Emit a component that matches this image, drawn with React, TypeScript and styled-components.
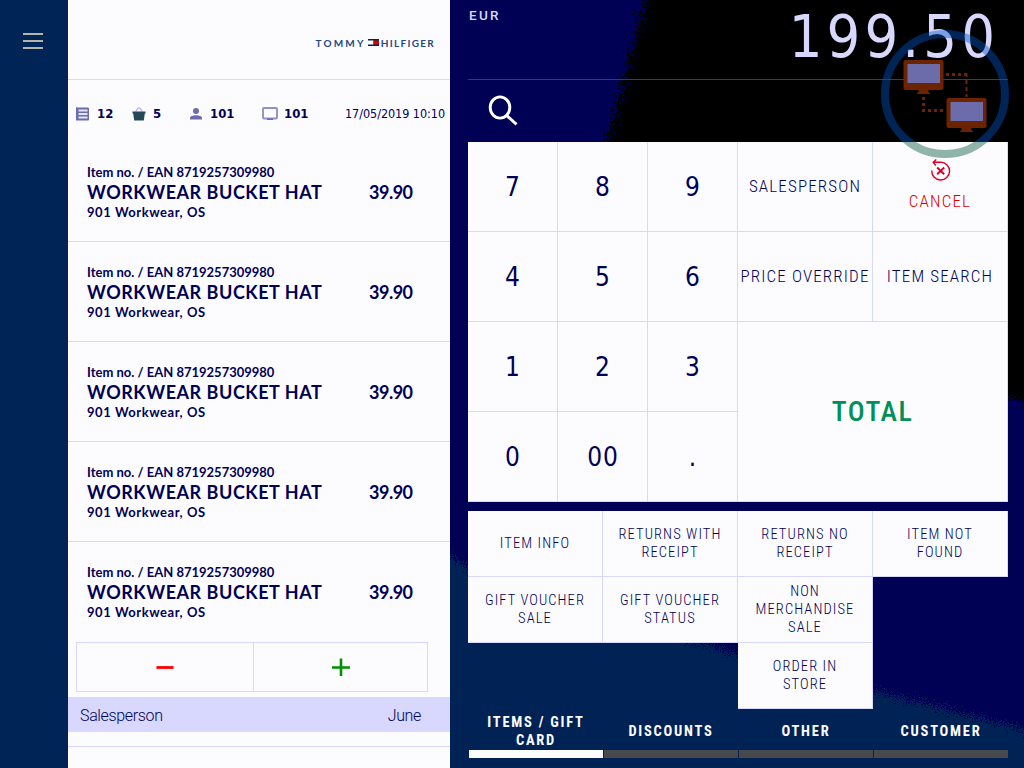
import React from "react";
import styled, { createGlobalStyle } from "styled-components";

const ink = "#000055";
const line = "#d8d8ff";
const paper = "#fcfcff";

const Global = createGlobalStyle`
  * { box-sizing: border-box; }
  body { margin: 0; background: #002455; }
  button { margin: 0; padding: 0; border: 0; background: none; color: inherit; font: inherit; letter-spacing: inherit; }
`;

const digits = `"DejaVu Sans Condensed", "DejaVu Sans", sans-serif`;
const narrow = `"Liberation Sans Narrow", "Roboto", sans-serif`;
const human = `"Lato", sans-serif`;

const Screen = styled.div`
  display: grid;
  grid-template-columns: 68px 382px 574px;
  width: 1024px;
  height: 768px;
  overflow: hidden;
  color: ${ink};
`;
const Sidebar = styled.nav`
  background: #002455;
  padding: 33px 0 0 23px;
`;
const MenuButton = styled.button`
  display: flex;
  flex-direction: column;
  gap: 5px;
  width: 20px;
`;
const MenuBar = styled.span`
  height: 2px;
  width: 20px;
  background: #b4b4aa;
`;

const Receipt = styled.main`
  background: ${paper};
  display: flex;
  flex-direction: column;
`;
const Brand = styled.header`
  height: 80px;
  flex: none;
  border-bottom: 1px solid ${line};
  display: flex;
  justify-content: flex-end;
  align-items: center;
  gap: 2px;
  padding: 6px 15px 0 0;
  font: 700 10px/12px ${human};
  color: #24487f;
`;
const BrandWord = styled.span<{ $gap: number }>`
  letter-spacing: ${(p) => p.$gap}px;
`;
const Stats = styled.div`
  height: 62px;
  flex: none;
  display: grid;
  grid-template-columns: 56px 58px 72px 83px 1fr;
  align-items: center;
  padding: 5px 0 0 8px;
`;
const Stat = styled.span<{ $gap: number }>`
  display: flex;
  align-items: center;
  gap: ${(p) => p.$gap}px;
  font: 700 13px/16px ${digits};
  font-stretch: condensed;
`;
const Stamp = styled.time`
  font: 12.5px/16px ${digits};
  font-stretch: condensed;
  letter-spacing: -0.05px;
  white-space: nowrap;
`;
const Item = styled.article<{ $last?: boolean }>`
  height: 100px;
  flex: none;
  display: grid;
  grid-template-columns: 282px 1fr;
  grid-template-rows: 19px 21px 20px;
  padding: 20px 0 0 19px;
  border-bottom: ${(p) => (p.$last ? 0 : 1)}px solid ${line};
  font-family: ${human};
  font-weight: 700;
  white-space: nowrap;
`;
const Small = styled.span<{ $spacing?: number }>`
  grid-column: 1 / -1;
  font-size: 13px;
  line-height: 20px;
  letter-spacing: ${(p) => p.$spacing ?? 0}px;
`;
const Name = styled.span`
  font-size: 18px;
  line-height: 22px;
  letter-spacing: 0.53px;
`;
const Price = styled(Name)`
  letter-spacing: -0.5px;
`;
const Quantity = styled.div`
  height: 50px;
  width: 352px;
  flex: none;
  margin: 0 0 5px 8px;
  border: 1px solid ${line};
  display: grid;
  grid-template-columns: 176px 1fr;
`;
const Step = styled.button`
  display: grid;
  place-items: center;
  & + & { border-left: 1px solid ${line}; }
`;
const Clerk = styled.div`
  height: 35px;
  flex: none;
  display: flex;
  justify-content: space-between;
  padding: 0 29px 0 12px;
  background: ${line};
  font: 300 16px/38px "Roboto", sans-serif;
  letter-spacing: -0.35px;
`;
const ReceiptEnd = styled.div`
  height: 15px;
  border-bottom: 1px solid ${line};
`;

const Register = styled.section`
  position: relative;
  z-index: 0;
  padding: 0 16px 0 18px;
  background: #000055;
`;
const Backdrop = styled.svg`
  position: absolute;
  inset: 0;
  z-index: -1;
`;
const Amount = styled.header`
  height: 80px;
  display: flex;
  justify-content: space-between;
  border-bottom: 1px solid #24485a;
`;
const Currency = styled.span`
  padding: 8px 0 0 1px;
  color: ${line};
  font: 500 13.5px/15px "Roboto", sans-serif;
  font-stretch: 88%;
  letter-spacing: 2.3px;
`;
const Sum = styled.span`
  padding-right: 9px;
  color: ${line};
  font: 59px/73px ${digits};
  font-stretch: condensed;
  letter-spacing: 4.1px;
`;
const Search = styled.div`
  height: 62px;
  padding: 15px 0 0 19px;
`;
const Keypad = styled.div`
  display: grid;
  grid-template-columns: 90px 90px 90px 135px 135px;
  grid-template-rows: repeat(4, 90px);
  background: ${paper};
`;
const Key = styled.button<{ $kind?: "word" | "total"; $red?: boolean }>`
  display: flex;
  flex-direction: column;
  align-items: center;
  justify-content: center;
  border-right: 1px solid ${line};
  border-bottom: 1px solid ${line};
  padding-bottom: ${(p) => (p.$red ? 3 : p.$kind === "word" ? 2 : 0)}px;
  padding-left: ${(p) => (p.$kind ? 0 : 1)}px;
  white-space: nowrap;
  color: ${(p) => (p.$red ? "#d80000" : p.$kind === "total" ? "#009055" : ink)};
  font-family: ${(p) => (p.$kind ? narrow : digits)};
  font-stretch: condensed;
  font-size: ${(p) => (p.$kind === "word" ? 17 : p.$kind === "total" ? 28 : 26)}px;
  font-weight: ${(p) => (p.$kind === "total" ? 500 : p.$kind === "word" ? 300 : 400)};
  letter-spacing: ${(p) => (p.$kind === "word" ? 1.15 : p.$kind ? 1.5 : 0.9)}px;
  ${(p) => p.$kind === "total" && "grid-column: 4 / 6; grid-row: 3 / 5;"}
`;
const CancelIcon = styled.svg`
  margin: 0 0 10px 2px;
`;
const Functions = styled.div`
  height: 198px;
  margin-top: 9px;
  display: grid;
  grid-template-columns: repeat(4, 135px);
  grid-template-rows: repeat(3, 66px);
`;
const Action = styled.button<{ $column?: number }>`
  grid-column: ${(p) => p.$column ?? "auto"};
  background: ${paper};
  border-right: 1px solid ${line};
  border-bottom: 1px solid ${line};
  padding-top: 1px;
  font: 300 14.5px/18px ${narrow};
  font-stretch: condensed;
  letter-spacing: 1.1px;
  white-space: pre-line;
`;
const Tabs = styled.div`
  display: grid;
  grid-template-columns: repeat(4, 1fr);
  gap: 1px;
  padding-left: 1px;
`;
const Tab = styled.button<{ $active?: boolean }>`
  height: 49px;
  border-bottom: 8px solid ${(p) => (p.$active ? paper : "#48484f")};
  color: ${paper};
  display: flex;
  align-items: center;
  justify-content: center;
  padding-top: 5px;
  font: 700 14.5px/18px ${narrow};
  font-stretch: condensed;
  letter-spacing: 1.75px;
  white-space: pre-line;
  text-align: center;
`;
const Network = styled.svg`
  position: absolute;
  left: 429px;
  top: 28px;
  pointer-events: none;
`;

const Monitor = ({ x, y }: { x: number; y: number }) => (
  <g transform={`translate(${x} ${y})`}>
    <rect width="40" height="30" rx="2" fill="#6c2400" />
    <rect x="4" y="4" width="32.5" height="19" fill="#6c6caa" />
    <path d="M15 30h10v2l2 2H13l2-2z" fill="#6c2400" />
  </g>
);

const actions: { label: string; column?: number }[] = [
  { label: "ITEM INFO" },
  { label: "RETURNS WITH\nRECEIPT" },
  { label: "RETURNS NO\nRECEIPT" },
  { label: "ITEM NOT\nFOUND" },
  { label: "GIFT VOUCHER\nSALE" },
  { label: "GIFT VOUCHER\nSTATUS" },
  { label: "NON\nMERCHANDISE\nSALE" },
  { label: "ORDER IN\nSTORE", column: 3 },
];

export default function App() {
  return (
    <Screen>
      <Global />
      <Sidebar>
        <MenuButton aria-label="Menu">
          <MenuBar /><MenuBar /><MenuBar />
        </MenuButton>
      </Sidebar>

      <Receipt>
        <Brand>
          <BrandWord $gap={2.2}>TOMMY</BrandWord>
          <svg width="11" height="7" viewBox="0 0 11 7">
            <path fill="#002455" d="M0 0h11v7H0z" />
            <path fill="#fff" d="M0 1.5h5.5v4H0z" />
            <path fill="#d80000" d="M5.5 1.5H11v4H5.5z" />
          </svg>
          <BrandWord $gap={1.3}>HILFIGER</BrandWord>
        </Brand>
        <Stats>
          <Stat $gap={7}>
            <svg width="14" height="14" viewBox="0 0 14 14">
              <path fill="#6c6caa" d="M0 .5 1 0l1 1 1-1 1 1 1-1 1 1 1-1 1 1 1-1 1 1 1-1 1 1 1-.5v13l-1-.5-1 1-1-1-1 1-1-1-1 1-1-1-1 1-1-1-1 1-1-1-1 1-1-1-1 .5z" />
              <path fill="#e4e4ff" d="M2.5 2.5h9v2h-9zM2.5 6h9v2h-9zM2.5 9.5h9v2h-9z" />
            </svg>
            12
          </Stat>
          <Stat $gap={7}>
            <svg width="14" height="14" viewBox="0 0 14 14">
              <path fill="none" stroke="#b4b4ff" strokeWidth="1.4" d="M3.5 5 5.5 1.8Q7 0 8.500 1.800L10.500 5" />
              <path fill="#24485a" d="M.5 4.500h13v2h-.7l-1 7H2.200l-1-7H.5z" />
            </svg>
            5
          </Stat>
          <Stat $gap={8}>
            <svg width="12" height="12" viewBox="0 0 12 12">
              <circle cx="6" cy="3" r="3" fill="#6c6caa" />
              <path fill="#6c6caa" d="M0 11.500V10C0 8.200 3 7.300 6 7.300s6 .9 6 2.700v1.500z" />
            </svg>
            101
          </Stat>
          <Stat $gap={6}>
            <svg width="16" height="14" viewBox="0 0 16 14">
              <rect x="1" y="1" width="14" height="10.500" rx="1" fill="none" stroke="#9090c8" strokeWidth="1.900" />
              <path fill="#6c6caa" d="M5 11.500h6V13H5z" />
            </svg>
            101
          </Stat>
          <Stamp>17/05/2019 10:10</Stamp>
        </Stats>
        {[0, 1, 2, 3, 4].map((n) => (
          <Item key={n} $last={n === 4}>
            <Small>Item no. / EAN 8719257309980</Small>
            <Name>WORKWEAR BUCKET HAT</Name>
            <Price>39.90</Price>
            <Small $spacing={0.55}>901 Workwear, OS</Small>
          </Item>
        ))}
        <Quantity>
          <Step aria-label="Less">
            <svg width="18" height="18"><path d="M.500 9.500h17" stroke="#ff0000" strokeWidth="2.800" /></svg>
          </Step>
          <Step aria-label="More">
            <svg width="18" height="18"><path d="M0 9.500h18M9 .500v18" stroke="#009000" strokeWidth="2.600" /></svg>
          </Step>
        </Quantity>
        <Clerk><span>Salesperson</span><span>June</span></Clerk>
        <ReceiptEnd />
      </Receipt>

      <Register>
        <Backdrop width="574" height="768" viewBox="0 0 574 768">
          <filter id="grain" x="-5%" y="-5%" width="110%" height="110%">
            <feTurbulence type="fractalNoise" baseFrequency="0.9" numOctaves="2" />
            <feDisplacementMap in="SourceGraphic" scale="32" xChannelSelector="R" yChannelSelector="G" />
          </filter>
          <g filter="url(#grain)">
            <path fill="#000" d="M203-30 195 0 157 142 155 300 400 384 558 397 600 412V-30z" />
            <path fill="#002455" d="M-30 549 0 557 16 565 256 645 386 681 574 730 604 737V800H-30z" />
          </g>
        </Backdrop>
        <Amount>
          <Currency>EUR</Currency>
          <Sum>199.50</Sum>
        </Amount>
        <Search>
          <svg width="32" height="32" viewBox="0 0 32 32" fill="none" stroke="#fff" strokeWidth="2.900">
            <ellipse cx="13" cy="12.500" rx="9.800" ry="10.600" />
            <path d="m19.500 20.300 10 9" />
          </svg>
        </Search>
        <Keypad>
          <Key>7</Key><Key>8</Key><Key>9</Key>
          <Key $kind="word">SALESPERSON</Key>
          <Key $kind="word" $red>
            <CancelIcon width="20" height="22" viewBox="0 0 20 22" fill="none" stroke="#d80024" strokeWidth="1.400">
              <path d="M.8 11.500A8.900 8.900 0 1 0 9.700 3.200H2.200M5.300.5 2.200 3.400 4.800 6.500" />
              <path strokeWidth="1.900" d="m6.200 8.500 7 6.800m0-6.800-7 6.800" />
            </CancelIcon>
            CANCEL
          </Key>
          <Key>4</Key><Key>5</Key><Key>6</Key>
          <Key $kind="word">PRICE OVERRIDE</Key>
          <Key $kind="word">ITEM SEARCH</Key>
          <Key>1</Key><Key>2</Key><Key>3</Key>
          <Key $kind="total">TOTAL</Key>
          <Key>0</Key><Key>00</Key><Key>.</Key>
        </Keypad>
        <Functions>
          {actions.map((a) => (
            <Action key={a.label} $column={a.column}>{a.label}</Action>
          ))}
        </Functions>
        <Tabs>
          <Tab $active>{"ITEMS / GIFT\nCARD"}</Tab>
          <Tab>DISCOUNTS</Tab>
          <Tab>OTHER</Tab>
          <Tab>CUSTOMER</Tab>
        </Tabs>
        <Network width="132" height="132" viewBox="0 0 132 132">
          <clipPath id="above"><path d="M0 0h132v114H0z" /></clipPath>
          <clipPath id="below"><path d="M0 114h132v18H0z" /></clipPath>
          <circle cx="66" cy="66" r="60" fill="none" stroke="rgba(0,84,198,.43)" strokeWidth="8" clipPath="url(#above)" />
          <circle cx="66" cy="66" r="60" fill="none" stroke="#90b4aa" strokeWidth="8" clipPath="url(#below)" />
          <path d="M67 46.500h20" stroke="#6c2400" strokeWidth="3" strokeDasharray="3 3" />
          <path d="M87.500 45v24" stroke="#6c2400" strokeWidth="2" strokeDasharray="4 3" />
          <path d="M44.500 69v14M43 82.500h24" fill="none" stroke="#6c2400" strokeWidth="3" strokeDasharray="3 3" />
          <Monitor x={24.500} y={32} />
          <Monitor x={67.500} y={70} />
        </Network>
      </Register>
    </Screen>
  );
}
